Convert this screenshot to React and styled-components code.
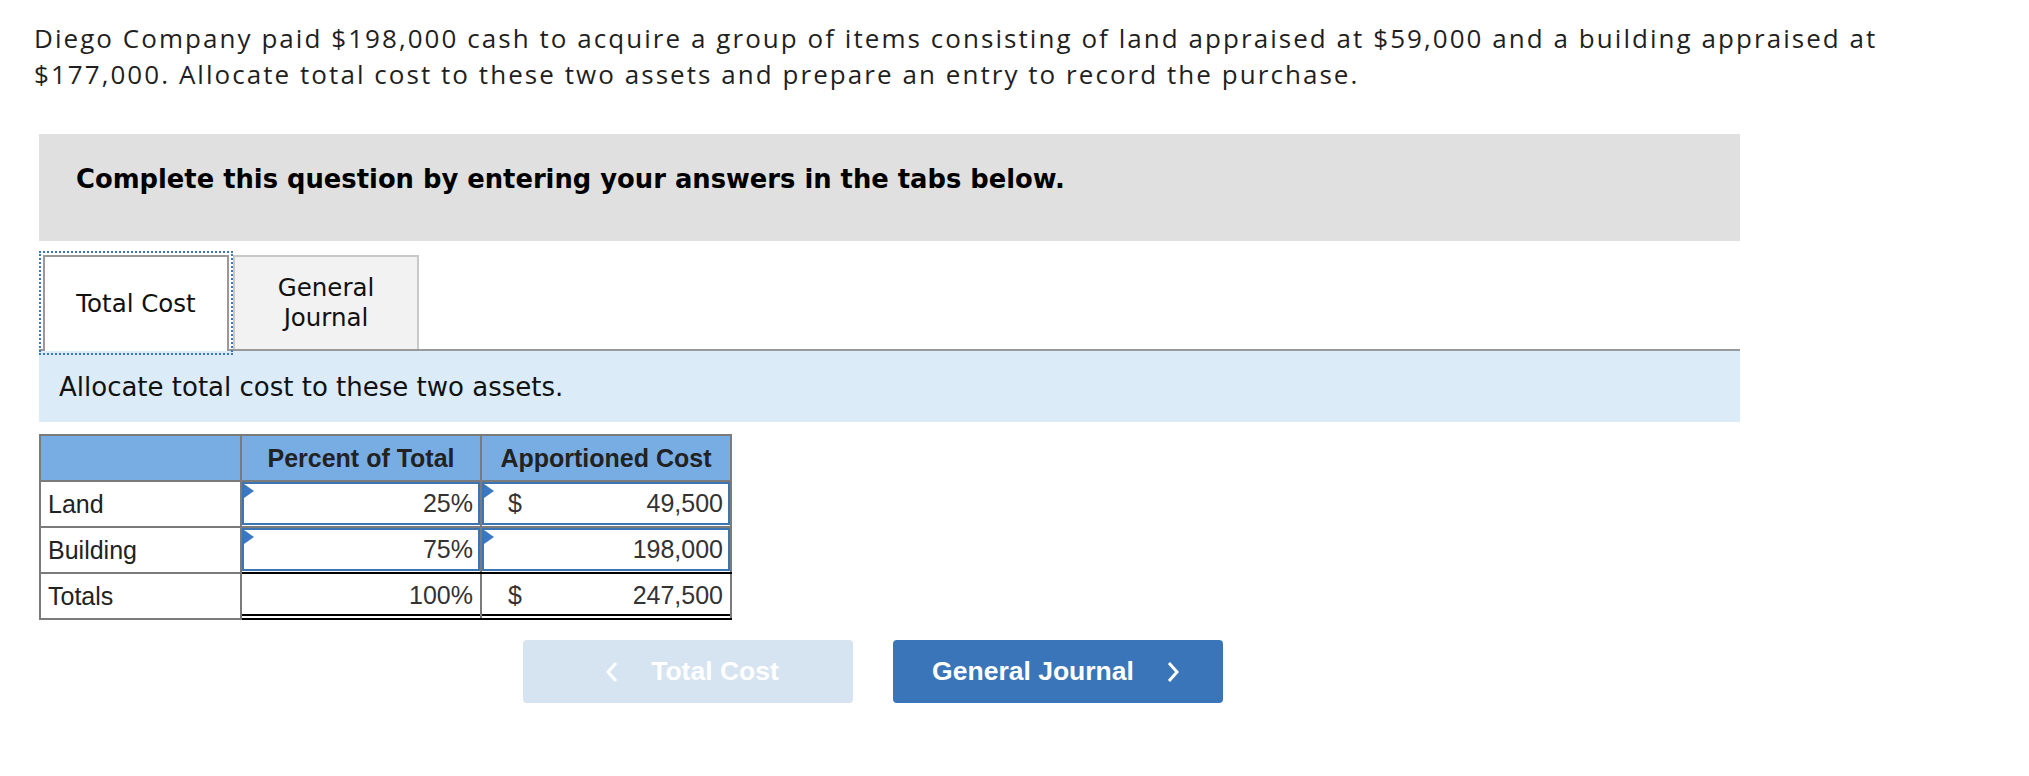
import React from "react";
import styled, { createGlobalStyle } from "styled-components";

const GlobalStyle = createGlobalStyle`
  body {
    margin: 0;
    background: #ffffff;
  }
`;

const Page = styled.div`
  padding: 20px 0 40px 34px;
`;

const Prompt = styled.p`
  margin: 0;
  font-family: "Open Sans", Lato, sans-serif;
  font-size: 26px;
  letter-spacing: 2.05px;
  line-height: 36px;
  color: #1f1f1f;
  white-space: nowrap;
`;

const Question = styled.div`
  margin: 42px 0 0 5px;
  width: 1701px;
`;

const Banner = styled.div`
  height: 107px;
  box-sizing: border-box;
  padding: 30px 0 0 37px;
  background: #e0e0e0;
  font-family: "DejaVu Sans", Verdana, sans-serif;
  font-weight: bold;
  font-size: 25.8px;
  color: #000;
`;

const TabBar = styled.div`
  display: flex;
  align-items: flex-end;
  gap: 4px;
  margin-top: 14px;
  padding-left: 4px;
  border-bottom: 2px solid #999999;
  font-family: "DejaVu Sans", Verdana, sans-serif;
  font-size: 24.5px;
  color: #111;
`;

const Tab = styled.div`
  box-sizing: border-box;
  width: 186px;
  height: ${(p) => (p.$active ? "96px" : "94px")};
  margin-bottom: ${(p) => (p.$active ? "-2px" : "0")};
  display: flex;
  align-items: center;
  justify-content: center;
  text-align: center;
  line-height: 30px;
  background: ${(p) => (p.$active ? "#ffffff" : "#f2f2f2")};
  border: 2px solid ${(p) => (p.$active ? "#999999" : "#c9c9c9")};
  border-bottom: none;
  outline: ${(p) => (p.$active ? "2px dotted #3a78c2" : "none")};
  outline-offset: 2px;
`;

const Instruction = styled.div`
  height: 71px;
  display: flex;
  align-items: center;
  padding-left: 20px;
  background: #dbebf8;
  font-family: "DejaVu Sans", Verdana, sans-serif;
  font-size: 26px;
  color: #111;
`;

const Grid = styled.table`
  margin-top: 12px;
  border-collapse: collapse;
  table-layout: fixed;
  width: 692px;
  font-family: "Liberation Sans", Arial, sans-serif;
  font-size: 25px;

  td,
  th {
    border: 2px solid #7b7b7b;
    padding: 0;
    line-height: 44px;
  }
`;

const HeadCell = styled.th`
  background: #78ade4;
  font-weight: bold;
  color: #222;
  text-align: center;
`;

const LabelCell = styled.td`
  padding-left: 7px !important;
  color: #222;
`;

const ValueCell = styled.td`
  padding: 0 0 1px 0 !important;
  ${(p) => p.$rule && "border-bottom-color: #000 !important;"}
  ${(p) =>
    p.$total &&
    `
    border-bottom-color: #000 !important;
    box-shadow: inset 0 -2px 0 #fff, inset 0 -4px 0 #000;
  `}
`;

const Field = styled.div`
  position: relative;
  box-sizing: border-box;
  height: 43px;
  display: flex;
  align-items: center;
  justify-content: space-between;
  padding: 0 5px 0 ${(p) => (p.$dollar ? "24px" : "5px")};
  border: 2px solid ${(p) => (p.$input ? "#3c74b4" : "transparent")};
  color: #333;
  line-height: normal;

  &::before {
    content: "";
    display: ${(p) => (p.$input ? "block" : "none")};
    position: absolute;
    left: 0;
    top: 0;
    border-left: 10px solid #3a78c2;
    border-top: 7px solid transparent;
    border-bottom: 7px solid transparent;
  }
`;

const Amount = styled.span`
  margin-left: auto;
`;

const ButtonRow = styled.div`
  display: flex;
  gap: 40px;
  margin-top: 20px;
  padding-left: 484px;
`;

const NavButton = styled.button`
  width: 330px;
  height: 63px;
  display: flex;
  align-items: center;
  justify-content: center;
  gap: 32px;
  padding: ${(p) => (p.$disabled ? "0 0 0 8px" : "0 4px 0 0")};
  border: none;
  border-radius: 4px;
  background: ${(p) => (p.$disabled ? "#d6e3f1" : "#3a75b9")};
  color: #ffffff;
  font-family: "Liberation Sans", Arial, sans-serif;
  font-weight: bold;
  font-size: 26.5px;
  cursor: ${(p) => (p.$disabled ? "default" : "pointer")};
`;

const Chevron = ({ left }) => (
  <svg width="14" height="22" viewBox="0 0 14 22">
    <polyline
      points={left ? "11,2 3,11 11,20" : "3,2 11,11 3,20"}
      fill="none"
      stroke="#ffffff"
      strokeWidth="3"
    />
  </svg>
);

const rows = [
  { label: "Land", pct: "25%", cost: "49,500", dollar: true },
  { label: "Building", pct: "75%", cost: "198,000", dollar: false },
];

export default function App() {
  return (
    <Page>
      <GlobalStyle />
      <Prompt>
        Diego Company paid $198,000 cash to acquire a group of items consisting
        of land appraised at $59,000 and a building appraised at
        <br />
        $177,000. Allocate total cost to these two assets and prepare an entry
        to record the purchase.
      </Prompt>

      <Question>
        <Banner>Complete this question by entering your answers in the tabs below.</Banner>

        <TabBar>
          <Tab $active>Total Cost</Tab>
          <Tab>
            General
            <br />
            Journal
          </Tab>
        </TabBar>

        <Instruction>Allocate total cost to these two assets.</Instruction>

        <Grid>
          <colgroup>
            <col style={{ width: 201 }} />
            <col style={{ width: 240 }} />
            <col style={{ width: 250 }} />
          </colgroup>
          <thead>
            <tr>
              <HeadCell />
              <HeadCell>Percent of Total</HeadCell>
              <HeadCell>Apportioned Cost</HeadCell>
            </tr>
          </thead>
          <tbody>
            {rows.map((r, i) => (
              <tr key={r.label}>
                <LabelCell>{r.label}</LabelCell>
                <ValueCell $rule={i === rows.length - 1}>
                  <Field $input>
                    <Amount>{r.pct}</Amount>
                  </Field>
                </ValueCell>
                <ValueCell $rule={i === rows.length - 1}>
                  <Field $input $dollar>
                    {r.dollar && <span>$</span>}
                    <Amount>{r.cost}</Amount>
                  </Field>
                </ValueCell>
              </tr>
            ))}
            <tr>
              <LabelCell>Totals</LabelCell>
              <ValueCell $total>
                <Field>
                  <Amount>100%</Amount>
                </Field>
              </ValueCell>
              <ValueCell $total>
                <Field $dollar>
                  <span>$</span>
                  <Amount>247,500</Amount>
                </Field>
              </ValueCell>
            </tr>
          </tbody>
        </Grid>

        <ButtonRow>
          <NavButton $disabled>
            <Chevron left />
            Total Cost
          </NavButton>
          <NavButton>
            General Journal
            <Chevron />
          </NavButton>
        </ButtonRow>
      </Question>
    </Page>
  );
}
